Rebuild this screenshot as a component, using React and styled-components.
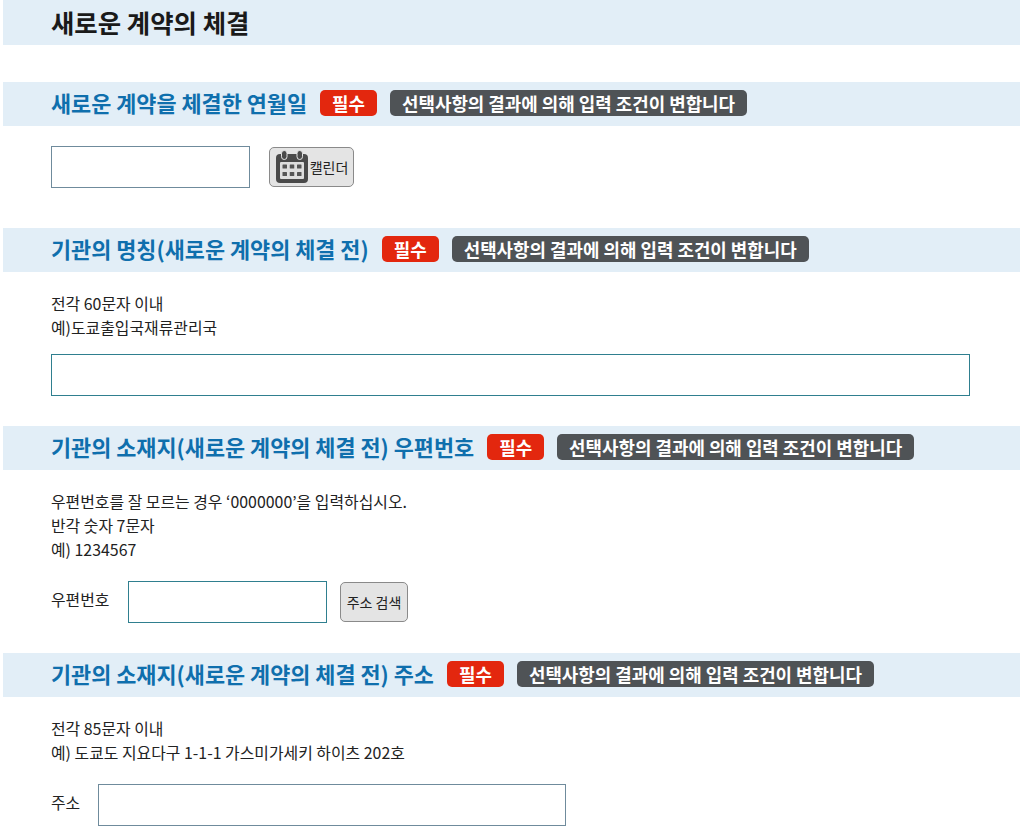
import React from 'react';
import styled, { createGlobalStyle } from 'styled-components';

const GlobalStyle = createGlobalStyle`
  html, body {
    margin: 0;
    padding: 0;
    background: #fff;
    overflow: hidden;
  }
  body {
    font-family: "Noto Sans CJK KR", "Noto Sans", sans-serif;
    color: #222;
  }
`;

const NOTICE = '선택사항의 결과에 의해 입력 조건이 변합니다';

function CalendarIcon() {
  return (
    <svg width="34" height="34" viewBox="0 0 34 34" fill="none">
      <rect x="1" y="4" width="32" height="29" rx="4" fill="#4a4a4a" />
      <rect x="5" y="12" width="24" height="17" rx="1" fill="#dedede" />
      <rect x="6.5" y="0.5" width="5.5" height="9" rx="2.75" fill="#4a4a4a" stroke="#e4e4e4" />
      <rect x="22" y="0.5" width="5.5" height="9" rx="2.75" fill="#4a4a4a" stroke="#e4e4e4" />
      <g fill="#555">
        <rect x="7.5" y="14.5" width="4.5" height="4" rx="0.5" />
        <rect x="14.75" y="14.5" width="4.5" height="4" rx="0.5" />
        <rect x="22" y="14.5" width="4.5" height="4" rx="0.5" />
        <rect x="7.5" y="22" width="4.5" height="4" rx="0.5" />
        <rect x="14.75" y="22" width="4.5" height="4" rx="0.5" />
        <rect x="22" y="22" width="4.5" height="4" rx="0.5" />
      </g>
    </svg>
  );
}

function SectionHead({ children }) {
  return (
    <SectionBand>
      <SectionTitle>{children}</SectionTitle>
      <RequiredBadge>필수</RequiredBadge>
      <NoticeBadge>{NOTICE}</NoticeBadge>
    </SectionBand>
  );
}

export default function App() {
  return (
    <Page>
      <GlobalStyle />
      <TitleBand>
        <PageTitle>새로운 계약의 체결</PageTitle>
      </TitleBand>

      <Section>
        <SectionHead>새로운 계약을 체결한 연월일</SectionHead>
        <Body $top={20} $bottom={40}>
          <FieldRow $gap={19}>
            <TextInput $width={199} $muted />
            <CalendarButton type="button">
              <CalendarIcon />
              캘린더
            </CalendarButton>
          </FieldRow>
        </Body>
      </Section>

      <Section>
        <SectionHead>기관의 명칭(새로운 계약의 체결 전)</SectionHead>
        <Body $top={20} $bottom={30}>
          <Hint $gap={14}>
            <p>전각 60문자 이내</p>
            <p>예)도쿄출입국재류관리국</p>
          </Hint>
          <TextInput $width={919} />
        </Body>
      </Section>

      <Section>
        <SectionHead>기관의 소재지(새로운 계약의 체결 전) 우편번호</SectionHead>
        <Body $top={20} $bottom={30}>
          <Hint $gap={19}>
            <p>우편번호를 잘 모르는 경우 ‘0000000’을 입력하십시오.</p>
            <p>반각 숫자 7문자</p>
            <p>예) 1234567</p>
          </Hint>
          <FieldRow $gap={13}>
            <FieldLabel $width={77}>우편번호</FieldLabel>
            <TextInput $width={199} />
            <SearchButton type="button">주소 검색</SearchButton>
          </FieldRow>
        </Body>
      </Section>

      <Section>
        <SectionHead>기관의 소재지(새로운 계약의 체결 전) 주소</SectionHead>
        <Body $top={20} $bottom={0}>
          <Hint $gap={19}>
            <p>전각 85문자 이내</p>
            <p>예) 도쿄도 지요다구 1-1-1 가스미가세키 하이츠 202호</p>
          </Hint>
          <FieldRow $gap={0}>
            <FieldLabel $width={47}>주소</FieldLabel>
            <TextInput $width={468} $muted />
          </FieldRow>
        </Body>
      </Section>
    </Page>
  );
}

const Page = styled.div`
  width: 1024px;
  height: 832px;
  overflow: hidden;
  box-sizing: border-box;
  padding: 0 4px 0 3px;
`;

const TitleBand = styled.header`
  height: 45px;
  margin-bottom: 37px;
  padding-left: 48px;
  display: flex;
  align-items: center;
  background: #e2eef7;
`;

const PageTitle = styled.h1`
  margin: 0;
  font-size: 25.4px;
  font-weight: 700;
  line-height: 1;
  color: #1a1a1a;
`;

const Section = styled.section``;

const SectionBand = styled.div`
  height: 44px;
  box-sizing: border-box;
  padding: 0 0 2px 48px;
  display: flex;
  align-items: center;
  background: #e2eef7;
`;

const SectionTitle = styled.h2`
  margin: 0;
  font-size: 21.85px;
  font-weight: 700;
  line-height: 1;
  color: #0f6fad;
`;

const Badge = styled.span`
  height: 26px;
  box-sizing: border-box;
  display: inline-flex;
  align-items: center;
  justify-content: center;
  border-radius: 5px;
  font-size: 17.9px;
  font-weight: 700;
  color: #fff;
`;

const RequiredBadge = styled(Badge)`
  width: 57px;
  margin-left: 13px;
  background: #e3270e;
`;

const NoticeBadge = styled(Badge)`
  width: 357px;
  margin-left: 13px;
  background: #4f5356;
`;

const Body = styled.div`
  padding: ${(p) => p.$top}px 0 ${(p) => p.$bottom}px 48px;
`;

const Hint = styled.div`
  margin-bottom: ${(p) => p.$gap}px;
  font-size: 15.9px;
  line-height: 24px;
  color: #222;

  p {
    margin: 0;
  }
`;

const FieldRow = styled.div`
  display: flex;
  align-items: center;
  gap: ${(p) => p.$gap}px;
`;

const FieldLabel = styled.label`
  width: ${(p) => p.$width}px;
  margin-right: ${(p) => (p.$width > 60 ? -13 : 0)}px;
  margin-top: -6px;
  font-size: 15.9px;
  color: #222;
`;

const TextInput = styled.input`
  display: block;
  width: ${(p) => p.$width}px;
  height: 42px;
  box-sizing: border-box;
  border: 1px solid ${(p) => (p.$muted ? '#6f8b9c' : '#2f7f8f')};
  border-radius: 0;
  background: #fff;
  outline: none;
`;

const GreyButton = styled.button`
  height: 40px;
  padding: 0;
  box-sizing: border-box;
  display: flex;
  align-items: center;
  justify-content: center;
  gap: 1px;
  border: 1px solid #8a8a8a;
  border-radius: 5px;
  background: #e4e4e4;
  font-family: inherit;
  font-size: 14px;
  color: #222;
`;

const CalendarButton = styled(GreyButton)`
  width: 85px;
`;

const SearchButton = styled(GreyButton)`
  width: 68px;
`;
